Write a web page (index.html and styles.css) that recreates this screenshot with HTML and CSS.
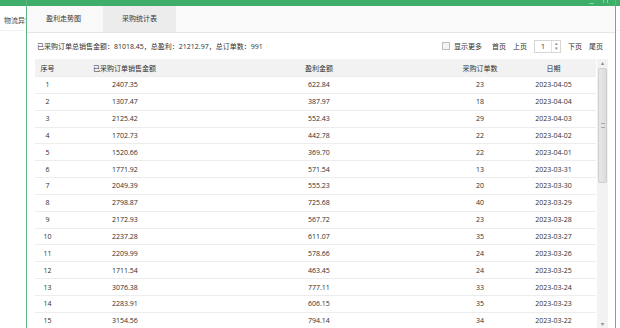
FILE: index.html
```html
<!DOCTYPE html>
<html lang="zh-CN">
<head>
  <meta charset="UTF-8">
  <title>采购统计表</title>
  <link rel="stylesheet" href="styles.css">
</head>
<body>

<div class="page">
  <div class="page-head"></div>
  <div class="page-nav">物流异常</div>
</div>

<div class="modal">
  <div class="modal-title">
    <span class="win-btn min"></span>
    <span class="win-btn close"></span>
  </div>
  <div class="tabs">
    <div class="tab">盈利走势图</div>
    <div class="tab active">采购统计表</div>
  </div>

  <div class="modal-body">
    <div class="toolbar">
      <div class="summary">已采购订单总销售金额：81018.45，总盈利：21212.97，总订单数：991</div>
      <div class="pager">
        <label class="more"><span class="check"></span>显示更多</label>
        <a class="first">首页</a>
        <a>上页</a>
        <div class="page-input">
          <span class="num">1</span>
          <span class="spin"><i>&#9652;</i><i>&#9662;</i></span>
        </div>
        <a>下页</a>
        <a>尾页</a>
      </div>
    </div>

    <div class="grid-wrap">
      <table class="grid">
        <colgroup>
          <col class="c-no">
          <col class="c-sales">
          <col class="c-profit">
          <col class="c-count">
          <col class="c-date">
          <col>
        </colgroup>
        <thead>
          <tr>
            <th class="no">序号</th>
            <th class="sales">已采购订单销售金额</th>
            <th class="profit">盈利金额</th>
            <th class="center">采购订单数</th>
            <th class="center">日期</th>
            <th></th>
          </tr>
        </thead>
        <tbody>
          <tr><td class="no">1</td><td class="sales">2407.35</td><td class="profit">622.84</td><td class="center">23</td><td class="center">2023-04-05</td><td></td></tr>
          <tr><td class="no">2</td><td class="sales">1307.47</td><td class="profit">387.97</td><td class="center">18</td><td class="center">2023-04-04</td><td></td></tr>
          <tr><td class="no">3</td><td class="sales">2125.42</td><td class="profit">552.43</td><td class="center">29</td><td class="center">2023-04-03</td><td></td></tr>
          <tr><td class="no">4</td><td class="sales">1702.73</td><td class="profit">442.78</td><td class="center">22</td><td class="center">2023-04-02</td><td></td></tr>
          <tr><td class="no">5</td><td class="sales">1520.66</td><td class="profit">369.70</td><td class="center">22</td><td class="center">2023-04-01</td><td></td></tr>
          <tr><td class="no">6</td><td class="sales">1771.92</td><td class="profit">571.54</td><td class="center">13</td><td class="center">2023-03-31</td><td></td></tr>
          <tr><td class="no">7</td><td class="sales">2049.39</td><td class="profit">555.23</td><td class="center">20</td><td class="center">2023-03-30</td><td></td></tr>
          <tr><td class="no">8</td><td class="sales">2798.87</td><td class="profit">725.68</td><td class="center">40</td><td class="center">2023-03-29</td><td></td></tr>
          <tr><td class="no">9</td><td class="sales">2172.93</td><td class="profit">567.72</td><td class="center">23</td><td class="center">2023-03-28</td><td></td></tr>
          <tr><td class="no">10</td><td class="sales">2237.28</td><td class="profit">611.07</td><td class="center">35</td><td class="center">2023-03-27</td><td></td></tr>
          <tr><td class="no">11</td><td class="sales">2209.99</td><td class="profit">578.66</td><td class="center">24</td><td class="center">2023-03-26</td><td></td></tr>
          <tr><td class="no">12</td><td class="sales">1711.54</td><td class="profit">463.45</td><td class="center">24</td><td class="center">2023-03-25</td><td></td></tr>
          <tr><td class="no">13</td><td class="sales">3076.38</td><td class="profit">777.11</td><td class="center">33</td><td class="center">2023-03-24</td><td></td></tr>
          <tr><td class="no">14</td><td class="sales">2283.91</td><td class="profit">606.15</td><td class="center">35</td><td class="center">2023-03-23</td><td></td></tr>
          <tr><td class="no">15</td><td class="sales">3154.56</td><td class="profit">794.14</td><td class="center">34</td><td class="center">2023-03-22</td><td></td></tr>
        </tbody>
      </table>

      <div class="scrollbar">
        <span class="arrow">&#9652;</span>
        <div class="thumb"><span class="grip"></span></div>
        <div class="track"></div>
        <span class="arrow">&#9662;</span>
      </div>
    </div>
  </div>
</div>

</body>
</html>
```

FILE: styles.css
```css
body {
  margin: 0;
  width: 620px;
  height: 328px;
  overflow: hidden;
  background-color: #fff;
  font-family: "Open Sans", "Noto Sans CJK SC", sans-serif;
  font-size: 7px;
  color: #2e2e2e;
}

.page-head {
  height: 6px;
  background-color: #3fae6a;
}

.page-nav {
  height: 24px;
  line-height: 30px;
  padding-left: 4px;
  border-bottom: 1px solid #f2f2f2;
  color: #444;
}

/* dialog sits over the page */
.modal {
  position: absolute;
  left: 26px;
  top: 0;
  width: 588px;
  height: 340px;
  background-color: #fff;
  border-left: 1px solid #5cb882;
  border-right: 1px solid #5cb882;
}

.modal-title {
  height: 6px;
  background-color: #3fae6a;
  display: flex;
  justify-content: flex-end;
  align-items: flex-start;
  gap: 9px;
  padding-right: 7px;
}

.win-btn {
  width: 5px;
  height: 3px;
}

.win-btn.min {
  border-bottom: 1px solid #8fd0a8;
}

.win-btn.close {
  border-left: 1px solid #8fd0a8;
  border-right: 1px solid #8fd0a8;
  width: 3px;
}

.tabs {
  display: flex;
  height: 26px;
  background-color: #f9f9f9;
  border-bottom: 1px solid #e6e6e6;
}

.tab {
  width: 76px;
  line-height: 26px;
  text-align: center;
  color: #333;
  padding-right: 3px;
  box-sizing: border-box;
}

.tab.active {
  width: 73px;
  padding-right: 0;
  background-color: #ececec;
}

.modal-body {
  padding: 0 7px 0 8px;
}

.toolbar {
  display: flex;
  align-items: center;
  justify-content: space-between;
  height: 26px;
}

.summary {
  padding-left: 2px;
}

.pager {
  display: flex;
  align-items: center;
  padding-right: 5px;
}

.pager a {
  margin-left: 7px;
}

.pager a.first {
  margin-left: 10px;
}

.more {
  display: flex;
  align-items: center;
}

.check {
  width: 6px;
  height: 6px;
  border: 1px solid #bdbdbd;
  background-color: #f4f4f4;
  margin-right: 4px;
}

.page-input {
  display: flex;
  margin-left: 7px;
  width: 27px;
  height: 13px;
  border: 1px solid #d6d6d6;
  box-sizing: border-box;
}

.page-input .num {
  flex: 1;
  line-height: 11px;
  padding-left: 6px;
}

.spin {
  width: 8px;
  display: flex;
  flex-direction: column;
  border-left: 1px solid #e2e2e2;
}

.spin i {
  flex: 1;
  font-style: normal;
  font-size: 5px;
  line-height: 5px;
  text-align: center;
  color: #888;
}

.grid-wrap {
  display: flex;
  gap: 1px;
}

.grid {
  width: 561px;
  border-collapse: collapse;
  table-layout: fixed;
}

.c-no { width: 25px; }
.c-sales { width: 245px; }
.c-profit { width: 135px; }
.c-count { width: 80px; }
.c-date { width: 67px; }

.grid th {
  height: 17px;
  padding: 0;
  font-weight: normal;
  text-align: left;
  background-color: #f2f2f2;
}

.grid td {
  height: 16.85px;
  padding: 0;
  box-sizing: border-box;
  border-top: 1px solid #ededed;
  line-height: 1;
}

.grid .no {
  text-align: center;
}

.grid th.sales {
  padding-left: 33px;
}

.grid td.sales {
  padding-left: 52px;
}

.grid td.profit {
  padding-left: 3px;
}

.grid .center {
  text-align: center;
}

.scrollbar {
  width: 11px;
  height: 270px;
  display: flex;
  flex-direction: column;
  align-items: center;
  background-color: #f2f2f2;
}

.scrollbar .arrow {
  font-size: 6px;
  line-height: 9px;
  color: #888;
}

.thumb {
  width: 7px;
  height: 113px;
  border: 1px solid #cfcfcf;
  border-radius: 2px;
  background: linear-gradient(to right, #e8e8e8, #dcdcdc);
  display: flex;
  align-items: center;
  justify-content: center;
}

.grip {
  width: 4px;
  height: 3px;
  border-top: 1px solid #a8a8a8;
  border-bottom: 1px solid #a8a8a8;
}

.track {
  flex: 1;
}
```
